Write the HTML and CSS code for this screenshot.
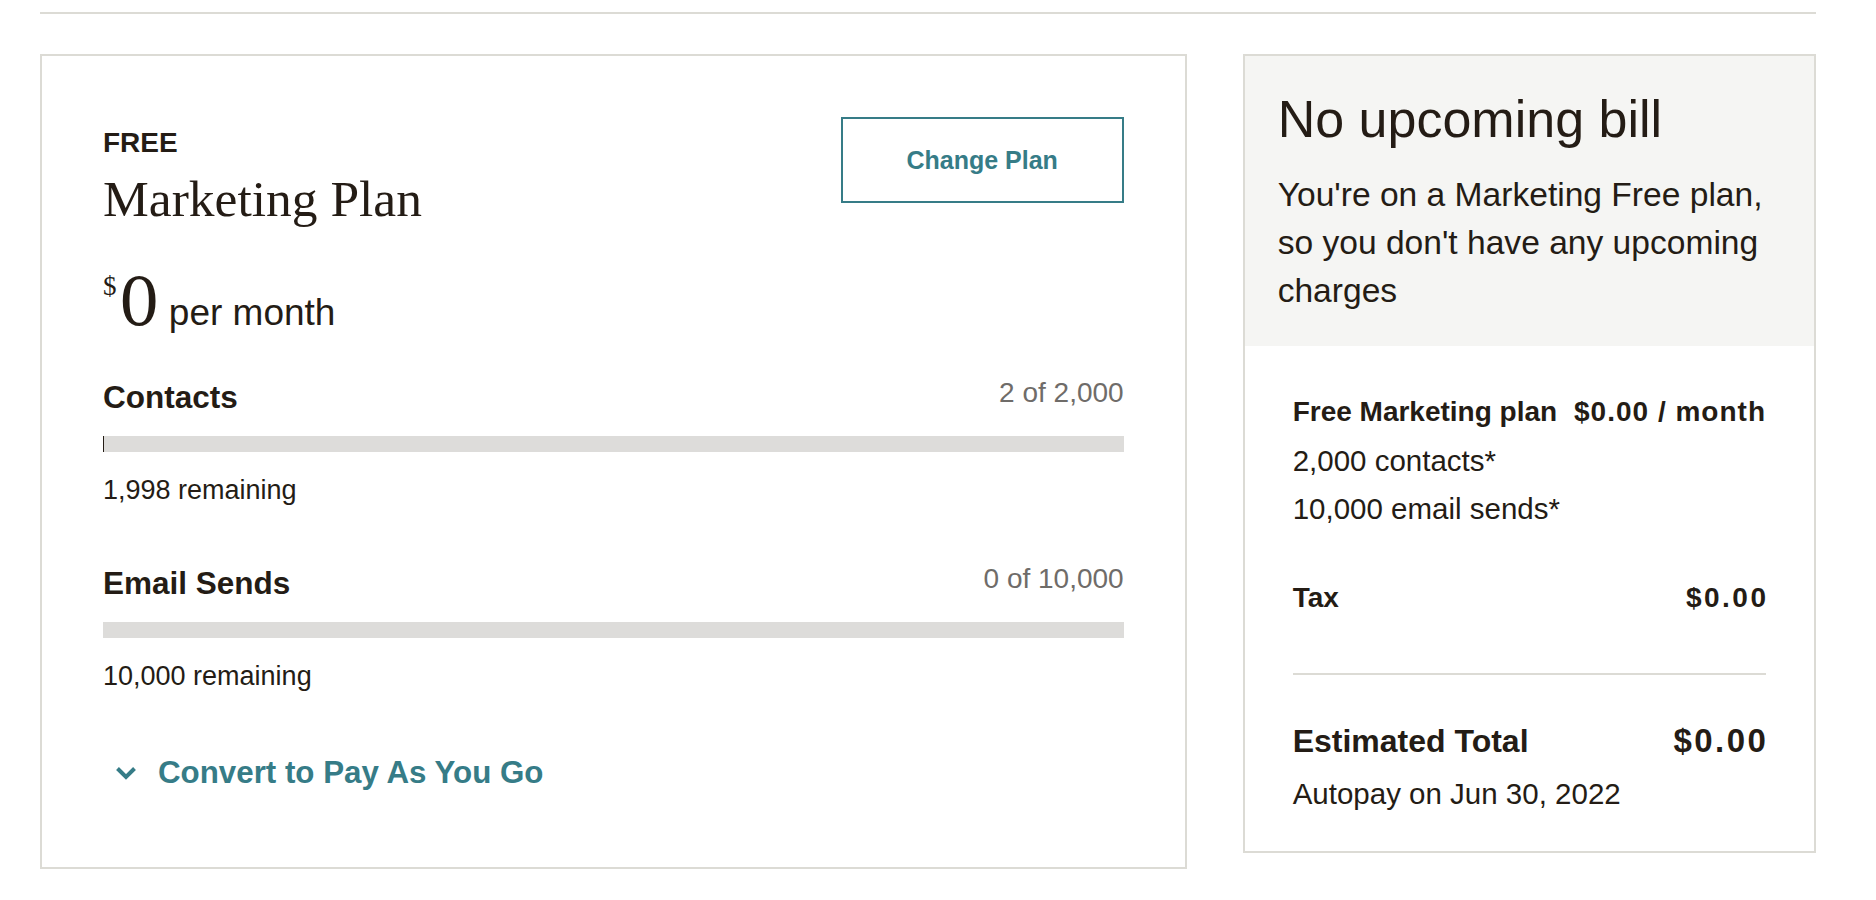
FILE: index.html
```html
<!DOCTYPE html>
<html lang="en">
<head>
<meta charset="utf-8">
<title>Billing</title>
<link rel="stylesheet" href="styles.css">
</head>
<body>
<div class="page">
  <div class="rule"></div>
  <div class="grid">
    <section class="plan-card">
      <div class="plan-head">
        <div class="plan-title">
          <div class="plan-tier">FREE</div>
          <h2 class="plan-name">Marketing Plan</h2>
        </div>
        <button class="btn-outline" type="button">Change Plan</button>
      </div>
      <div class="price"><span class="cur">$</span>0<span class="per">per month</span></div>

      <div class="usage">
        <div class="usage-head">
          <span class="usage-label">Contacts</span>
          <span class="usage-count">2 of 2,000</span>
        </div>
        <div class="bar"><div class="bar-fill" style="width:0.1%"></div></div>
        <div class="usage-rem">1,998 remaining</div>
      </div>

      <div class="usage usage-next">
        <div class="usage-head">
          <span class="usage-label">Email Sends</span>
          <span class="usage-count">0 of 10,000</span>
        </div>
        <div class="bar"><div class="bar-fill" style="width:0%"></div></div>
        <div class="usage-rem">10,000 remaining</div>
      </div>

      <a class="convert" href="#">
        <svg class="chev" width="22" height="14" viewBox="0 0 22 14" aria-hidden="true"><path d="M2.5 2.5 L11 11 L19.5 2.5" fill="none" stroke="currentColor" stroke-width="4"/></svg>
        <span>Convert to Pay As You Go</span>
      </a>
    </section>

    <aside class="bill-card">
      <div class="bill-head">
        <h2 class="bill-title">No upcoming bill</h2>
        <p class="bill-text">You're on a Marketing Free plan, so you don't have any upcoming charges</p>
      </div>
      <div class="bill-body">
        <div class="row row-strong">
          <span>Free Marketing plan</span>
          <span class="money">$0.00 / month</span>
        </div>
        <div class="line first-line">2,000 contacts*</div>
        <div class="line">10,000 email sends*</div>
        <div class="row row-strong tax">
          <span>Tax</span>
          <span class="money money-wide">$0.00</span>
        </div>
        <div class="divider"></div>
        <div class="row total">
          <span>Estimated Total</span>
          <span class="total-val">$0.00</span>
        </div>
        <div class="line autopay">Autopay on Jun 30, 2022</div>
      </div>
    </aside>
  </div>
</div>
</body>
</html>
```

FILE: styles.css
```css
* { box-sizing: border-box; }

html, body {
  margin: 0;
  padding: 0;
  background: #ffffff;
}

body {
  font-family: "Liberation Sans", Arial, sans-serif;
  color: #241c15;
}

.page {
  padding: 12px 60px 0 40px;
}

.rule {
  height: 2px;
  background: #dcdbd5;
  margin-bottom: 40px;
}

.grid {
  display: grid;
  grid-template-columns: 2fr 1fr;
  column-gap: 56px;
  align-items: start;
}

/* ---------- plan card ---------- */
.plan-card {
  border: 2px solid #dcdbd5;
  padding: 61px 61px 61px;
}

.plan-head {
  display: flex;
  justify-content: space-between;
  align-items: flex-start;
}

.plan-title {
  padding-top: 10px;
}

.plan-tier {
  font-size: 28px;
  line-height: 32px;
  font-weight: 700;
}

.plan-name {
  margin: 10px 0 0;
  font-family: "Liberation Serif", "Times New Roman", serif;
  font-weight: 400;
  font-size: 51.5px;
  line-height: 60px;
}

.btn-outline {
  width: 283px;
  height: 86px;
  border: 2px solid #367c87;
  background: #ffffff;
  color: #367c87;
  font-family: "Liberation Sans", Arial, sans-serif;
  font-weight: 700;
  font-size: 25px;
  border-radius: 0;
  padding: 0;
}

.price {
  margin-top: 41px;
  font-family: "DejaVu Serif", "Liberation Serif", serif;
  font-size: 65px;
  line-height: 66px;
}

.cur {
  font-family: "Liberation Serif", "Times New Roman", serif;
  font-size: 27px;
  line-height: 1;
  vertical-align: 30px;
  margin-right: 2px;
}

.per {
  font-family: "Liberation Sans", Arial, sans-serif;
  font-size: 37px;
  line-height: 1;
  margin-left: 9px;
}

.usage {
  margin-top: 41px;
}

.usage-next {
  margin-top: 53px;
}

.usage-head {
  display: flex;
  justify-content: space-between;
  align-items: flex-start;
}

.usage-label {
  font-size: 31.5px;
  line-height: 40px;
  font-weight: 700;
}

.usage-count {
  font-size: 28px;
  line-height: 32px;
  color: #6f6c69;
}

.bar {
  margin-top: 19px;
  height: 16px;
  background: #dddcda;
}

.bar-fill {
  height: 100%;
  background: #241c15;
}

.usage-rem {
  margin-top: 18px;
  font-size: 27px;
  line-height: 40px;
}

.convert {
  margin-top: 57px;
  margin-bottom: 13px;
  display: flex;
  align-items: center;
  gap: 21px;
  padding-left: 12px;
  color: #367c87;
  text-decoration: none;
  font-weight: 700;
  font-size: 31.3px;
  line-height: 40px;
}

.chev {
  display: block;
  flex: none;
}

/* ---------- bill card ---------- */
.bill-card {
  border: 2px solid #dcdbd5;
}

.bill-head {
  background: #f5f5f3;
  padding: 32px 33px 31px;
}

.bill-title {
  margin: 0;
  font-weight: 400;
  font-size: 52px;
  line-height: 62px;
}

.bill-text {
  margin: 21px 0 0;
  font-size: 33.6px;
  line-height: 48px;
}

.bill-body {
  padding: 42px 48px 33px;
}

.row {
  display: flex;
  justify-content: space-between;
  align-items: baseline;
}

.row-strong {
  font-size: 28px;
  line-height: 48px;
  font-weight: 700;
}

.money {
  letter-spacing: 1px;
}

.money-wide {
  letter-spacing: 2.5px;
  margin-right: -2.5px;
}

.line {
  font-size: 29.5px;
  line-height: 48px;
}

.first-line {
  margin-top: 1px;
}

.tax {
  margin-top: 41px;
}

.divider {
  margin-top: 51px;
  height: 2px;
  background: #dcdbd5;
}

.total {
  margin-top: 42px;
  font-size: 32px;
  line-height: 48px;
  font-weight: 700;
}

.total-val {
  font-size: 33px;
  letter-spacing: 2.5px;
  margin-right: -2.5px;
}

.autopay {
  margin-top: 5px;
}
```
